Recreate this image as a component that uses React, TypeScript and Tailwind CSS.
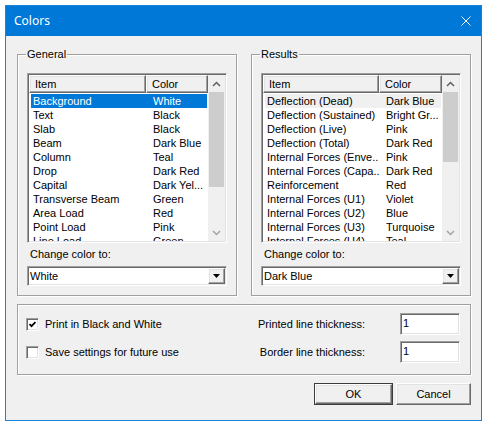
import React from "react"

// classic 3D edges
const SUNKEN =
  "border border-[#a0a0a0] border-r-white border-b-white shadow-[inset_1px_1px_0_#696969,inset_-1px_-1px_0_#e3e3e3]"
const RAISED =
  "border border-white border-r-[#696969] border-b-[#696969] shadow-[inset_-1px_-1px_0_#a0a0a0,inset_1px_1px_0_#e3e3e3]"

const general: [string, string][] = [
  ["Background", "White"],
  ["Text", "Black"],
  ["Slab", "Black"],
  ["Beam", "Dark Blue"],
  ["Column", "Teal"],
  ["Drop", "Dark Red"],
  ["Capital", "Dark Yel..."],
  ["Transverse Beam", "Green"],
  ["Area Load", "Red"],
  ["Point Load", "Pink"],
  ["Line Load", "Green"],
]

const results: [string, string][] = [
  ["Deflection (Dead)", "Dark Blue"],
  ["Deflection (Sustained)", "Bright Gr..."],
  ["Deflection (Live)", "Pink"],
  ["Deflection (Total)", "Dark Red"],
  ["Internal Forces (Enve...", "Pink"],
  ["Internal Forces (Capa...", "Dark Red"],
  ["Reinforcement", "Red"],
  ["Internal Forces (U1)", "Violet"],
  ["Internal Forces (U2)", "Blue"],
  ["Internal Forces (U3)", "Turquoise"],
  ["Internal Forces (U4)", "Teal"],
]

function Chevron({ up, color }: { up?: boolean; color: string }) {
  return (
    <svg width="9" height="6" viewBox="0 0 9 6">
      <polyline
        points={up ? "1,5 4.5,1.5 8,5" : "1,1 4.5,4.5 8,1"}
        fill="none"
        stroke={color}
        strokeWidth="1.5"
      />
    </svg>
  )
}

function ScrollBar({ thumbClass }: { thumbClass: string }) {
  return (
    <div className="w-[17px] shrink-0 flex flex-col bg-[#f0f0f0]">
      <div className="h-[17px] flex items-center justify-center">
        <Chevron up color="#606060" />
      </div>
      <div className="flex-1 flex flex-col">
        <div className={`mx-px bg-[#cdcdcd] ${thumbClass}`} />
      </div>
      <div className="h-[17px] flex items-center justify-center">
        <Chevron color="#a3a3a3" />
      </div>
    </div>
  )
}

function ListView({
  rows,
  itemClass,
  cellClass,
  thumbClass,
  firstRowClass,
}: {
  rows: [string, string][]
  itemClass: string
  cellClass: string
  thumbClass: string
  firstRowClass: string
}) {
  return (
    <div className={`w-[200px] h-[170px] p-px bg-white flex ${SUNKEN}`}>
      <div className="flex-1 flex flex-col overflow-hidden">
        <div className="h-[18px] shrink-0 flex">
          <div className={`${itemClass} bg-[#f0f0f0] pl-[5px] leading-[16px] ${RAISED}`}>Item</div>
          <div className={`flex-1 bg-[#f0f0f0] pl-[5px] leading-[16px] ${RAISED}`}>Color</div>
        </div>
        <div className="flex flex-col pl-[2px] pt-px">
          {rows.map(([item, color], i) => (
            <div
              key={item}
              className={`h-[14px] shrink-0 flex leading-[14px] whitespace-nowrap ${
                i === 0 ? firstRowClass : ""
              }`}
            >
              <div className={`${cellClass} pl-[2px] overflow-hidden`}>{item}</div>
              <div className="w-[60px] pl-[7px] overflow-hidden">{color}</div>
            </div>
          ))}
        </div>
      </div>
      <ScrollBar thumbClass={thumbClass} />
    </div>
  )
}

function Combo({ value }: { value: string }) {
  return (
    <div className={`h-[20px] w-[200px] p-px bg-white flex ${SUNKEN}`}>
      <div className="flex-1 pl-px leading-[16px]">{value}</div>
      <div className={`w-[17px] bg-[#f0f0f0] flex items-center justify-center ${RAISED}`}>
        <svg width="7" height="4" viewBox="0 0 7 4">
          <path d="M0 0h7L3.5 4z" fill="#000" />
        </svg>
      </div>
    </div>
  )
}

function CheckBox({ checked }: { checked?: boolean }) {
  return (
    <div className={`w-[13px] h-[13px] bg-white flex items-center justify-center ${SUNKEN}`}>
      {checked && (
        <svg width="7" height="7" viewBox="0 0 7 7">
          <polyline points="0.5,3 2.5,5.2 6.5,1" fill="none" stroke="#000" strokeWidth="1.8" />
        </svg>
      )}
    </div>
  )
}

function Group({
  title,
  className,
  children,
}: {
  title: string
  className: string
  children: React.ReactNode
}) {
  return (
    <fieldset
      className={`border border-[#a0a0a0] shadow-[inset_1px_1px_0_#fff,1px_1px_0_#fff] px-[9px] pt-[12px] pb-[9px] ${className}`}
    >
      <legend className="px-px -ml-px leading-[13px]">{title}</legend>
      {children}
    </fieldset>
  )
}

export default function App() {
  return (
    <div className="w-[486px] h-[426px] bg-white pt-[5px] pl-[5px] font-['Liberation_Sans',Arial,sans-serif] text-[11px] text-black">
      <div className="w-[477px] h-[416px] border border-[#1883d7] flex flex-col">
        {/* title bar */}
        <div className="h-[30px] shrink-0 bg-[#0078d7] flex items-center justify-between pl-[8px] pr-[10px]">
          <span className="font-['Noto_Sans',sans-serif] text-[12px] text-white">Colors</span>
          <svg width="10" height="10" viewBox="0 0 10 10">
            <path d="M0.5 0.5L9.5 9.5M9.5 0.5L0.5 9.5" stroke="#fff" strokeWidth="1" />
          </svg>
        </div>

        {/* body */}
        <div className="flex-1 bg-[#f0f0f0] pl-[11px] pr-[10px] pt-[12px] flex flex-col">
          <div className="flex gap-[14px]">
            <Group title="General" className="w-[219px]">
              <ListView
                rows={general}
                itemClass="w-[117px]"
                cellClass="w-[115px]"
                thumbClass="h-[95px]"
                firstRowClass="bg-[#0078d7] text-white w-[176px]"
              />
              <div className="mt-[4px] h-[14px] leading-[14px] pl-[3px]">Change color to:</div>
              <div className="mt-[5px]">
                <Combo value="White" />
              </div>
            </Group>
            <Group title="Results" className="w-[221px]">
              <ListView
                rows={results}
                itemClass="w-[116px]"
                cellClass="w-[114px]"
                thumbClass="h-[70px]"
                firstRowClass="bg-[#f0f0f0] w-[176px]"
              />
              <div className="mt-[4px] h-[14px] leading-[14px] pl-[3px]">Change color to:</div>
              <div className="mt-[5px]">
                <Combo value="Dark Blue" />
              </div>
            </Group>
          </div>

          {/* options */}
          <div className="mt-[8px] h-[71px] border border-[#a0a0a0] shadow-[inset_1px_1px_0_#fff,1px_1px_0_#fff] flex items-start justify-between pl-[8px] pr-[10px] pt-[8px]">
            <div className="flex flex-col gap-[6px]">
              <div className="h-[22px] flex items-center gap-[6px]">
                <CheckBox checked />
                <span>Print in Black and White</span>
              </div>
              <div className="h-[22px] flex items-center gap-[6px]">
                <CheckBox />
                <span>Save settings for future use</span>
              </div>
            </div>
            <div className="grid grid-cols-[auto_60px] grid-rows-[22px_22px] gap-x-[35px] gap-y-[6px] items-center">
              <span className="text-right">Printed line thickness:</span>
              <div className={`h-[22px] bg-white pl-[2px] leading-[18px] ${SUNKEN}`}>1</div>
              <span className="text-right">Border line thickness:</span>
              <div className={`h-[22px] bg-white pl-[2px] leading-[18px] ${SUNKEN}`}>1</div>
            </div>
          </div>

          {/* buttons */}
          <div className="mt-[8px] flex justify-end gap-[3px]">
            <div className="w-[79px] h-[22px] border border-[#3c3c3c]">
              <div className={`h-full flex items-center justify-center bg-[#f0f0f0] ${RAISED}`}>OK</div>
            </div>
            <div className={`w-[75px] h-[22px] flex items-center justify-center bg-[#f0f0f0] ${RAISED}`}>
              Cancel
            </div>
          </div>
        </div>
      </div>
    </div>
  )
}
